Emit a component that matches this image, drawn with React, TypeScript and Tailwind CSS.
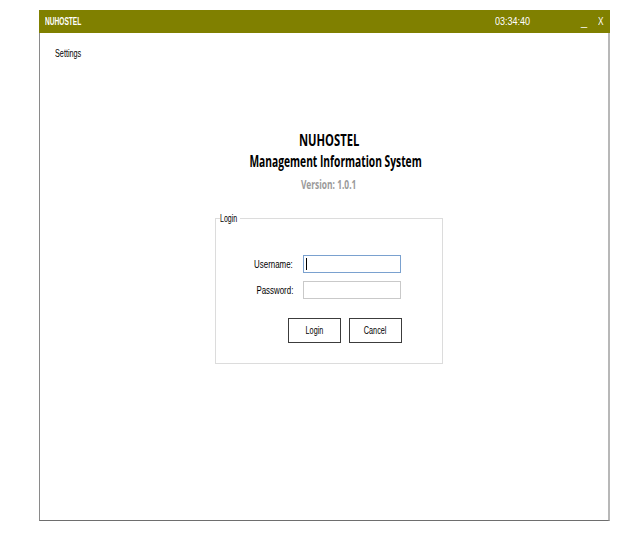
import { useState } from "react"

const sans = "font-['Liberation_Sans',Arial,sans-serif]"
const title = "font-['Open_Sans',sans-serif]"

function Squeeze({ children, origin = "origin-left", scale = "scale-x-[0.66]" }: { children: React.ReactNode; origin?: string; scale?: string }) {
  return <span className={`inline-block whitespace-nowrap ${origin} ${scale}`}>{children}</span>
}

export default function App() {
  const [username, setUsername] = useState("")
  const [password, setPassword] = useState("")

  return (
    <div className={`min-h-screen bg-white pl-[39px] pt-[10px] ${sans}`}>
      <div className="w-[571px]">
        <div className="flex h-[23px] items-center bg-[#808000] pl-[6px] text-white">
          <span className="w-[450px] text-[10px] font-bold leading-none">
            <Squeeze>NUHOSTEL</Squeeze>
          </span>
          <span className="w-[86px] text-[11px] leading-none">
            <Squeeze scale="scale-x-[0.82]">03:34:40</Squeeze>
          </span>
          <span className="mt-[2px] w-[17px] text-[11px] leading-none">_</span>
          <span className="text-[11px] leading-none">
            <Squeeze scale="scale-x-[0.75]">X</Squeeze>
          </span>
        </div>

        <div className="h-[488px] border-b border-l border-r-2 border-b-[#6e6e6e] border-l-[#8a8a8a] border-r-[#b8b8b8]">
          <div className="pl-[15px] pt-[14px] text-[11px] leading-[12px] text-black">
            <Squeeze>Settings</Squeeze>
          </div>

          <div className="flex flex-col items-center pl-[10px] pt-[71px]">
            <div className={`${title} text-[16px] font-bold leading-[21px] text-black`}>
              <Squeeze origin="origin-center" scale="scale-x-[0.7]">NUHOSTEL</Squeeze>
            </div>
            <div className={`${title} ml-[13px] text-[16px] font-bold leading-[21px] text-black`}>
              <Squeeze origin="origin-center" scale="scale-x-[0.64]">Management Information System</Squeeze>
            </div>
            <div className={`${title} mt-[5px] text-[12px] font-bold leading-[16px] text-[#9a9a9a]`}>
              <Squeeze origin="origin-center" scale="scale-x-[0.7]">Version: 1.0.1</Squeeze>
            </div>

            <fieldset className="mt-[18px] w-[228px] border border-[#dcdcdc] px-[4px] pb-[20px]">
              <legend className="w-[20px] text-[11px] leading-[14px] text-black">
                <Squeeze scale="scale-x-[0.64]">Login</Squeeze>
              </legend>

              <div className="mt-[30px] grid grid-cols-[73px_98px] items-center gap-x-[10px] gap-y-[8px] text-[11px] text-black">
                <label className="text-right leading-[14px]">
                  <Squeeze origin="origin-right" scale="scale-x-[0.72]">Username:</Squeeze>
                </label>
                <div className="relative h-[18px]">
                  <input
                    value={username}
                    onChange={(e) => setUsername(e.target.value)}
                    className="h-full w-full border border-[#7aa1cf] bg-white px-[3px] text-[11px] outline-none"
                  />
                  <span className="absolute left-[3px] top-[3px] h-[12px] w-px bg-black" />
                </div>
                <label className="text-right leading-[14px]">
                  <Squeeze origin="origin-right" scale="scale-x-[0.72]">Password:</Squeeze>
                </label>
                <input
                  type="password"
                  value={password}
                  onChange={(e) => setPassword(e.target.value)}
                  className="h-[18px] w-full border border-[#c9c9c9] bg-white px-[3px] text-[11px] outline-none"
                />
              </div>

              <div className="ml-[68px] mt-[19px] flex gap-[8px]">
                <button className="h-[25px] w-[53px] border border-[#3c3c3c] bg-white text-[11px] text-black">
                  <Squeeze origin="origin-center" scale="scale-x-[0.66]">Login</Squeeze>
                </button>
                <button className="h-[25px] w-[53px] border border-[#3c3c3c] bg-white text-[11px] text-black">
                  <Squeeze origin="origin-center" scale="scale-x-[0.66]">Cancel</Squeeze>
                </button>
              </div>
            </fieldset>
          </div>
        </div>
      </div>
    </div>
  )
}
